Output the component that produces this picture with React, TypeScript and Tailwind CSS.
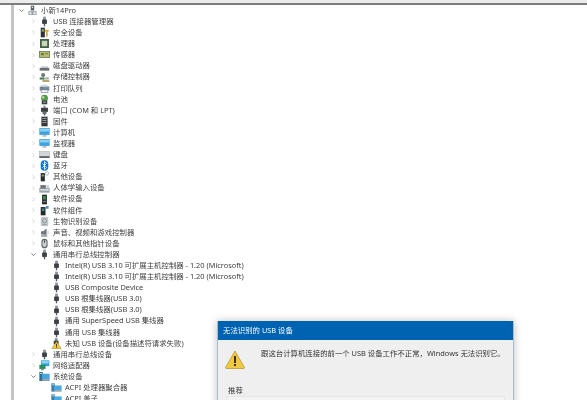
type IconName =
  | "pc" | "usb" | "security" | "cpu" | "sensor" | "disk" | "storage" | "printer" | "battery" | "port"
  | "firmware" | "monitor" | "keyboard" | "bluetooth" | "other" | "hid" | "softdev" | "softcomp" | "bio"
  | "sound" | "mouse" | "warnusb" | "network" | "folder" | "chip";

type Row = { label: string; level: 0 | 1 | 2; icon: IconName; arrow?: "open" | "closed" };

const rows: Row[] = [
  { label: "小新14Pro", level: 0, icon: "pc", arrow: "open" },
  { label: "USB 连接器管理器", level: 1, icon: "usb", arrow: "closed" },
  { label: "安全设备", level: 1, icon: "security", arrow: "closed" },
  { label: "处理器", level: 1, icon: "cpu", arrow: "closed" },
  { label: "传感器", level: 1, icon: "sensor", arrow: "closed" },
  { label: "磁盘驱动器", level: 1, icon: "disk", arrow: "closed" },
  { label: "存储控制器", level: 1, icon: "storage", arrow: "closed" },
  { label: "打印队列", level: 1, icon: "printer", arrow: "closed" },
  { label: "电池", level: 1, icon: "battery", arrow: "closed" },
  { label: "端口 (COM 和 LPT)", level: 1, icon: "port", arrow: "closed" },
  { label: "固件", level: 1, icon: "firmware", arrow: "closed" },
  { label: "计算机", level: 1, icon: "monitor", arrow: "closed" },
  { label: "监视器", level: 1, icon: "monitor", arrow: "closed" },
  { label: "键盘", level: 1, icon: "keyboard", arrow: "closed" },
  { label: "蓝牙", level: 1, icon: "bluetooth", arrow: "closed" },
  { label: "其他设备", level: 1, icon: "other", arrow: "closed" },
  { label: "人体学输入设备", level: 1, icon: "hid", arrow: "closed" },
  { label: "软件设备", level: 1, icon: "softdev", arrow: "closed" },
  { label: "软件组件", level: 1, icon: "softcomp", arrow: "closed" },
  { label: "生物识别设备", level: 1, icon: "bio", arrow: "closed" },
  { label: "声音、视频和游戏控制器", level: 1, icon: "sound", arrow: "closed" },
  { label: "鼠标和其他指针设备", level: 1, icon: "mouse", arrow: "closed" },
  { label: "通用串行总线控制器", level: 1, icon: "usb", arrow: "open" },
  { label: "Intel(R) USB 3.10 可扩展主机控制器 - 1.20 (Microsoft)", level: 2, icon: "usb" },
  { label: "Intel(R) USB 3.10 可扩展主机控制器 - 1.20 (Microsoft)", level: 2, icon: "usb" },
  { label: "USB Composite Device", level: 2, icon: "usb" },
  { label: "USB 根集线器(USB 3.0)", level: 2, icon: "usb" },
  { label: "USB 根集线器(USB 3.0)", level: 2, icon: "usb" },
  { label: "通用 SuperSpeed USB 集线器", level: 2, icon: "usb" },
  { label: "通用 USB 集线器", level: 2, icon: "usb" },
  { label: "未知 USB 设备(设备描述符请求失败)", level: 2, icon: "warnusb" },
  { label: "通用串行总线设备", level: 1, icon: "usb", arrow: "closed" },
  { label: "网络适配器", level: 1, icon: "network", arrow: "closed" },
  { label: "系统设备", level: 1, icon: "folder", arrow: "open" },
  { label: "ACPI 处理器聚合器", level: 2, icon: "chip" },
  { label: "ACPI 盖子", level: 2, icon: "chip" },
];

function Icon({ name }: { name: IconName }) {
  const body = () => {
    switch (name) {
      case "pc":
        return (
          <>
            <rect x="5.5" y="1" width="5" height="7" fill="#5a6068" />
            <rect x="7" y="2.5" width="2" height="2" fill="#dfe5ea" />
            <rect x="2" y="9" width="12" height="5.5" fill="#9aa0a6" />
            <rect x="3.5" y="10.5" width="3" height="3" fill="#eef0f2" />
            <rect x="9.5" y="10.5" width="3" height="3" fill="#eef0f2" />
          </>
        );
      case "usb":
        return (
          <>
            <rect x="6" y="1" width="4" height="5" fill="#8d9297" />
            <rect x="4.5" y="5" width="7" height="6.5" rx="1" fill="#3c4045" />
            <rect x="7" y="11" width="2" height="4" fill="#55595e" />
          </>
        );
      case "security":
        return (
          <>
            <rect x="2.5" y="1" width="6" height="14" fill="#2f3337" />
            <rect x="4" y="3" width="3" height="4" fill="#8ea06a" />
            <rect x="9" y="4" width="5" height="3" fill="#d9a520" />
            <rect x="10.5" y="7" width="2" height="7" fill="#c9951a" />
          </>
        );
      case "cpu":
        return (
          <>
            <rect x="1.5" y="1.5" width="13" height="13" fill="#3f5a45" />
            <rect x="4" y="4" width="8" height="8" fill="#c9d6b6" />
          </>
        );
      case "sensor":
        return (
          <>
            <rect x="0.5" y="3.5" width="15" height="9" fill="#b9bb6a" stroke="#5f6a50" />
            <rect x="3" y="6" width="4" height="3" fill="#4d7a4a" />
            <rect x="9" y="6" width="4" height="1.5" fill="#6f7a55" />
          </>
        );
      case "disk":
        return (
          <>
            <rect x="1" y="10" width="14" height="4" fill="#6a6f74" />
            <rect x="3" y="8" width="10" height="2" fill="#b5bac0" />
          </>
        );
      case "storage":
        return (
          <>
            <circle cx="6" cy="4.5" r="3" fill="#6f7b70" />
            <rect x="1" y="8" width="7" height="3" fill="#3d7a50" />
            <rect x="5" y="11" width="10" height="3.5" fill="#b4a76a" />
            <rect x="9" y="8" width="5" height="2" fill="#8d9aa5" />
          </>
        );
      case "printer":
        return (
          <>
            <rect x="1" y="5" width="14" height="6" fill="#7b8c9c" />
            <rect x="3.5" y="2.5" width="9" height="2.5" fill="#cdd9e2" />
            <rect x="3" y="10" width="10" height="3.5" fill="#eef3f6" stroke="#4c5a66" strokeWidth="0.7" />
            <rect x="3" y="6.5" width="3" height="1.2" fill="#2d6f9c" />
          </>
        );
      case "battery":
        return (
          <>
            <circle cx="8" cy="6" r="5" fill="#4f9a4d" />
            <circle cx="6" cy="5" r="2" fill="#a9d68e" />
            <rect x="4" y="9.5" width="8" height="5.5" fill="#3c4145" />
            <rect x="6" y="11" width="4" height="2" fill="#8b9096" />
          </>
        );
      case "port":
        return (
          <>
            <rect x="6.5" y="1" width="3" height="3" fill="#7c8187" />
            <rect x="3" y="4" width="10" height="6" fill="#3b3f44" />
            <rect x="5" y="10" width="6" height="3" fill="#686d72" />
            <rect x="7" y="13" width="2" height="2" fill="#3b3f44" />
          </>
        );
      case "firmware":
        return (
          <>
            <rect x="3.5" y="1" width="9" height="14" fill="#34383c" />
            <rect x="5" y="3" width="6" height="1.2" fill="#a6abb0" />
            <rect x="5" y="6" width="6" height="1.2" fill="#a6abb0" />
            <rect x="5" y="9" width="6" height="1.2" fill="#a6abb0" />
          </>
        );
      case "monitor":
        return (
          <>
            <rect x="0.5" y="1.5" width="15" height="10" fill="#3fa2df" />
            <rect x="1.5" y="2.5" width="13" height="4" fill="#8ed0f2" />
            <rect x="5" y="12" width="6" height="2" fill="#a9afb5" />
          </>
        );
      case "keyboard":
        return (
          <>
            <rect x="0.5" y="3.5" width="15" height="7" fill="#d2d5d9" stroke="#9ba0a6" strokeWidth="0.6" />
            <rect x="0.5" y="10.5" width="15" height="2.5" fill="#54595e" />
          </>
        );
      case "bluetooth":
        return (
          <>
            <rect x="2.5" y="0.5" width="11" height="15" rx="5.5" fill="#0a74d6" />
            <path d="M5 5l6 6-3 3V2l3 3-6 6" fill="none" stroke="#fff" strokeWidth="1.2" />
          </>
        );
      case "other":
        return (
          <>
            <rect x="2.5" y="3" width="6" height="12" fill="#26292c" />
            <rect x="4" y="5" width="3" height="3" fill="#9aa06f" />
            <circle cx="11.5" cy="3.5" r="2.5" fill="none" stroke="#8a9bb0" strokeWidth="1" />
          </>
        );
      case "hid":
        return (
          <>
            <rect x="0.5" y="7" width="15" height="7" fill="#9aa2aa" />
            <rect x="2" y="3" width="8" height="5" fill="#6f7880" />
            <rect x="11" y="3" width="3" height="5" fill="#c8ced3" />
            <rect x="2" y="9" width="12" height="2" fill="#e6e9ec" />
          </>
        );
      case "softdev":
        return (
          <>
            <rect x="4.5" y="1" width="7" height="14" fill="#23272a" />
            <rect x="6" y="3" width="4" height="5" fill="#3f8f5a" />
            <rect x="6" y="10" width="4" height="2" fill="#7f868c" />
          </>
        );
      case "softcomp":
        return (
          <>
            <rect x="2.5" y="3" width="7" height="12" fill="#23272a" />
            <rect x="4" y="5" width="4" height="4" fill="#3f7f8f" />
            <rect x="10" y="1.5" width="4" height="4" fill="#4a90c0" />
          </>
        );
      case "bio":
        return (
          <>
            <rect x="2.5" y="1" width="11" height="14" rx="2" fill="#c3c8cc" />
            <circle cx="8" cy="7" r="3" fill="none" stroke="#7d858c" strokeWidth="1.2" />
            <rect x="5" y="12" width="6" height="1" fill="#858c92" />
          </>
        );
      case "sound":
        return (
          <>
            <path d="M3 6h3l5-4v12l-5-3H3z" fill="#70767c" />
            <rect x="3" y="11" width="9" height="3.5" fill="#a9aeb3" />
            <rect x="12.5" y="5" width="1.2" height="5" fill="#b9bec2" />
          </>
        );
      case "mouse":
        return (
          <>
            <rect x="3.5" y="1" width="9" height="14" rx="4.5" fill="#5f656b" />
            <rect x="5" y="3" width="6" height="10" rx="3" fill="#c9ced2" />
            <rect x="7.3" y="3.5" width="1.4" height="3.5" fill="#3c4045" />
          </>
        );
      case "warnusb":
        return (
          <>
            <rect x="5.5" y="0.5" width="4" height="5" fill="#7f8489" />
            <rect x="4" y="4" width="7" height="5" fill="#3c4045" />
            <path d="M8 5l7 10.5H1z" fill="#f3c53a" stroke="#8a7320" strokeWidth="0.6" />
            <rect x="7.4" y="8.5" width="1.2" height="4" fill="#222" />
            <rect x="7.4" y="13" width="1.2" height="1.2" fill="#222" />
          </>
        );
      case "network":
        return (
          <>
            <rect x="3" y="0.5" width="12" height="8.5" fill="#31a0dd" />
            <rect x="4" y="1.5" width="10" height="3.5" fill="#8fd3f2" />
            <rect x="0.5" y="7" width="9" height="6" fill="#2c8c5c" />
            <rect x="3" y="13" width="4" height="2" fill="#8d949a" />
          </>
        );
      case "folder":
        return (
          <>
            <rect x="0.5" y="1.5" width="5" height="13" fill="#2f6f9c" />
            <rect x="5" y="4" width="10.5" height="8" fill="#45a7e0" />
            <rect x="5" y="12" width="10.5" height="2.5" fill="#8d98a2" />
            <rect x="1.5" y="3" width="3" height="1.2" fill="#cfe3f1" />
          </>
        );
      case "chip":
        return (
          <>
            <rect x="0.5" y="2" width="5" height="12" fill="#3c7fae" />
            <rect x="5" y="5" width="10.5" height="7" fill="#4aa9e0" />
            <rect x="5" y="12" width="10.5" height="2" fill="#8d98a2" />
            <rect x="1.5" y="3.5" width="3" height="1.2" fill="#cfe3f1" />
          </>
        );
    }
  };
  return (
    <svg viewBox="0 0 16 16" className="w-[11px] h-[11px] shrink-0">
      {body()}
    </svg>
  );
}

function Arrow({ kind }: { kind?: "open" | "closed" }) {
  if (!kind) return <span className="w-[8px] shrink-0" />;
  return (
    <span className="w-[8px] flex justify-center shrink-0">
      {kind === "open" ? (
        <svg viewBox="0 0 6 4" className="w-[5px] h-[3.5px]">
          <path d="M0.5 0.5L3 3l2.5-2.5" fill="none" stroke="#555" strokeWidth="0.9" />
        </svg>
      ) : (
        <svg viewBox="0 0 4 6" className="w-[3px] h-[4.5px]">
          <path d="M0.7 0.5L3.2 3 0.7 5.5" fill="none" stroke="#c4c4c4" strokeWidth="1" />
        </svg>
      )}
    </span>
  );
}

function TreeRow({ row }: { row: Row }) {
  const indent = row.level === 0 ? "pl-[3px]" : row.level === 1 ? "pl-[15px]" : "pl-[27px]";
  return (
    <div className={`h-[11.1px] flex items-center whitespace-nowrap ${indent}`}>
      <Arrow kind={row.arrow} />
      <span className="ml-[2px] w-[11px] flex justify-center shrink-0">
        <Icon name={row.icon} />
      </span>
      <span className="ml-[3px] text-[7.4px] leading-none text-[#404040]">{row.label}</span>
    </div>
  );
}

export default function App() {
  return (
    <div className="relative w-[587px] h-[400px] overflow-hidden bg-white blur-[0.3px] font-['Noto_Sans','Noto_Sans_CJK_SC',sans-serif]">
      {/* barra superior */}
      <div className="h-[3px] bg-[#ececec]" />
      <div className="h-[2px] bg-[#7d7d7d]" />

      <div className="flex">
        <div className="w-[11px] shrink-0" />
        <div className="w-[3px] shrink-0 bg-[#c4c4c4] self-stretch" />
        <div className="flex-1 min-w-0">
          {rows.map((r, i) => (
            <TreeRow key={i} row={r} />
          ))}
        </div>
      </div>

      {/* Dialogo */}
      <div className="absolute left-[217px] top-[321px] w-[297px] h-[90px] bg-[#efefef] border-x border-[#a9bdd0] shadow-[0_0_8px_rgba(0,0,0,0.25)]">
        <div className="h-[19px] bg-[#0063b1] flex items-center pl-[5px] text-[7.4px] text-white">无法识别的 USB 设备</div>
        <div className="flex pl-[7px] pt-[10px]">
          <svg viewBox="0 0 20 19" className="w-[20px] h-[19px] shrink-0">
            <path d="M10 1L19.5 17.5Q19.5 18.5 18.5 18.5H1.5Q0.5 18.5 0.5 17.5Z" fill="#f2c93e" stroke="#b49a3a" strokeWidth="0.8" />
            <rect x="9" y="6" width="2" height="7" fill="#3a3018" />
            <rect x="9" y="14" width="2" height="2" fill="#3a3018" />
          </svg>
          <p className="ml-[16px] text-[7.4px] leading-[8px] mt-[-1px] whitespace-nowrap text-[#333]">
            跟这台计算机连接的前一个 USB 设备工作不正常，Windows 无法识别它。
          </p>
        </div>
        <div className="ml-[10px] mt-[16px] text-[7.4px] leading-[10px] text-[#333]">推荐</div>
        <div className="mx-[8px] mt-[1px] h-[10px] bg-[#f3f3f3] border border-[#e6e6e6]" />
      </div>
    </div>
  );
}
